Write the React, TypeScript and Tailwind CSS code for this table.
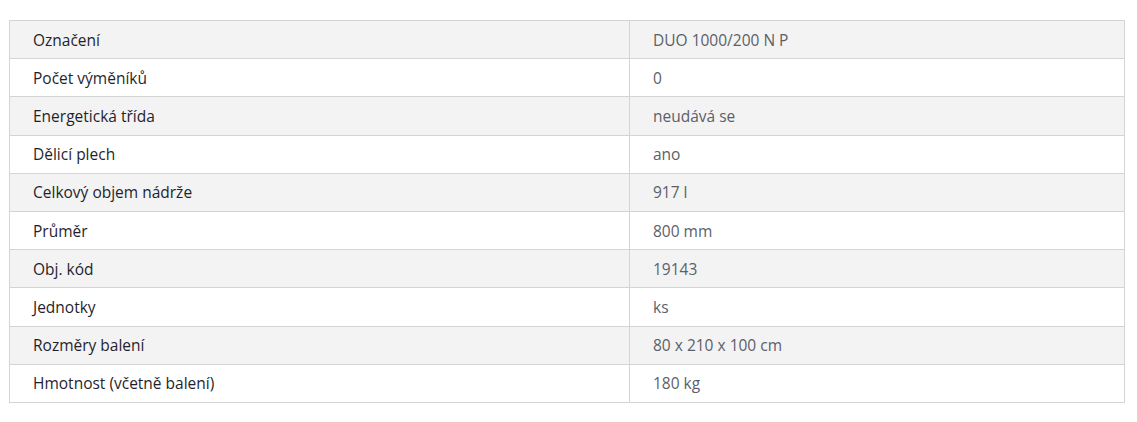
import React from "react";

const rows: [string, string][] = [
  ["Označení", "DUO 1000/200 N P"],
  ["Počet výměníků", "0"],
  ["Energetická třída", "neudává se"],
  ["Dělicí plech", "ano"],
  ["Celkový objem nádrže", "917 l"],
  ["Průměr", "800 mm"],
  ["Obj. kód", "19143"],
  ["Jednotky", "ks"],
  ["Rozměry balení", "80 x 210 x 100 cm"],
  ["Hmotnost (včetně balení)", "180 kg"],
];

export default function App() {
  return (
    <div className="w-[1137px] h-[422px] bg-white pt-[20px] pl-[9px]" style={{ fontFamily: '"Open Sans", sans-serif' }}>
      <table className="w-[1116px] border-collapse border border-[#d4d4d4] text-[15.5px] leading-[24px]">
        <tbody>
          {rows.map(([k, v], i) => (
            <tr key={k} className={i % 2 === 0 ? "bg-[#f3f3f3]" : "bg-white"}>
              <td className="w-[620px] border border-[#d4d4d4] pl-[23px] py-[6.6px] text-[#1f1f2e]">{k}</td>
              <td className="border border-[#d4d4d4] pl-[23px] py-[6.6px] text-[#5c5f68]">{v}</td>
            </tr>
          ))}
        </tbody>
      </table>
    </div>
  );
}
